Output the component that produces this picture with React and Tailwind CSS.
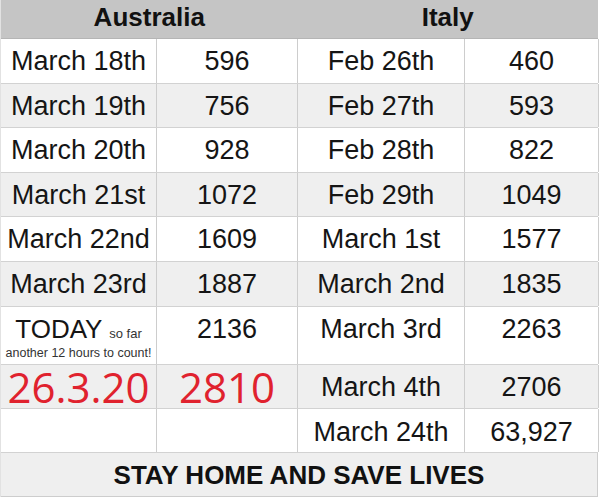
import React from "react";

const rows = [
  { h: "h-[45px]", bg: "bg-white", c: ["March 18th", "596", "Feb 26th", "460"] },
  { h: "h-[44px]", bg: "bg-[#efefef]", c: ["March 19th", "756", "Feb 27th", "593"] },
  { h: "h-[45px]", bg: "bg-white", c: ["March 20th", "928", "Feb 28th", "822"] },
  { h: "h-[44px]", bg: "bg-[#efefef]", c: ["March 21st", "1072", "Feb 29th", "1049"] },
  { h: "h-[45px]", bg: "bg-white", c: ["March 22nd", "1609", "March 1st", "1577"] },
  { h: "h-[45px]", bg: "bg-[#efefef]", c: ["March 23rd", "1887", "March 2nd", "1835"] },
];

const widths = ["w-[156px]", "w-[141px]", "w-[167px]", "w-[134px]"];

function Cell({ w, children, className = "" }) {
  return (
    <div
      className={`${w} shrink-0 border-r border-[#cdcdcd] text-center pt-[7px] text-[27px] leading-[30px] text-[#151515] whitespace-nowrap ${className}`}
    >
      {children}
    </div>
  );
}

export default function App() {
  return (
    <div
      className="w-[600px] h-[499px] bg-white overflow-hidden"
      style={{ fontFamily: '"Liberation Sans", Arial, sans-serif' }}
    >
      <div className="w-[598px] border-l border-[#e2e2e2]">
        <div className="flex h-[39px] bg-[#c5c5c5] border-b border-[#b5b5b5] text-[26px] font-bold leading-[30px] text-[#111]">
          <div className="w-[297px] text-center pt-[2px]">Australia</div>
          <div className="w-[301px] text-center pt-[2px]">Italy</div>
        </div>
        {rows.map((r, i) => (
          <div key={i} className={`flex ${r.h} ${r.bg} border-b border-[#d2d2d2]`}>
            {r.c.map((t, j) => (
              <Cell key={j} w={widths[j]}>
                {t}
              </Cell>
            ))}
          </div>
        ))}
        <div className="flex h-[58px] bg-white border-b border-[#d2d2d2]">
          <Cell w={widths[0]}>
            <div className="h-[30px] leading-[30px]">
              <span className="text-[26px] leading-none">TODAY</span>
              <span className="text-[26px] leading-none"> </span>
              <span className="text-[13px] leading-none text-[#333]">so far</span>
            </div>
            <div className="text-[12.5px] leading-[16px] mt-[1px] text-[#333]">another 12 hours to count!</div>
          </Cell>
          <Cell w={widths[1]}>2136</Cell>
          <Cell w={widths[2]}>March 3rd</Cell>
          <Cell w={widths[3]}>2263</Cell>
        </div>
        <div className="flex h-[44px] bg-[#efefef] border-b border-[#d2d2d2]">
          <Cell w={widths[0]} className="!pt-[2px]">
            <span
              className="text-[42px] leading-[40px] text-[#e0222e]"
              style={{ fontFamily: '"Open Sans", sans-serif' }}
            >
              26.3.20
            </span>
          </Cell>
          <Cell w={widths[1]} className="!pt-[2px]">
            <span
              className="text-[42px] leading-[40px] text-[#e0222e]"
              style={{ fontFamily: '"Open Sans", sans-serif' }}
            >
              2810
            </span>
          </Cell>
          <Cell w={widths[2]}>March 4th</Cell>
          <Cell w={widths[3]}>2706</Cell>
        </div>
        <div className="flex h-[44px] bg-white border-b border-[#d2d2d2]">
          <Cell w={widths[0]}></Cell>
          <Cell w={widths[1]}></Cell>
          <Cell w={widths[2]} className="!pt-[8px]">March 24th</Cell>
          <Cell w={widths[3]} className="!pt-[8px]">63,927</Cell>
        </div>
        <div className="flex items-center justify-center h-[44px] bg-[#efefef] border-b border-[#cdcdcd] border-r text-[26px] font-bold text-[#111] leading-[30px]">
          STAY HOME AND SAVE LIVES
        </div>
      </div>
    </div>
  );
}
